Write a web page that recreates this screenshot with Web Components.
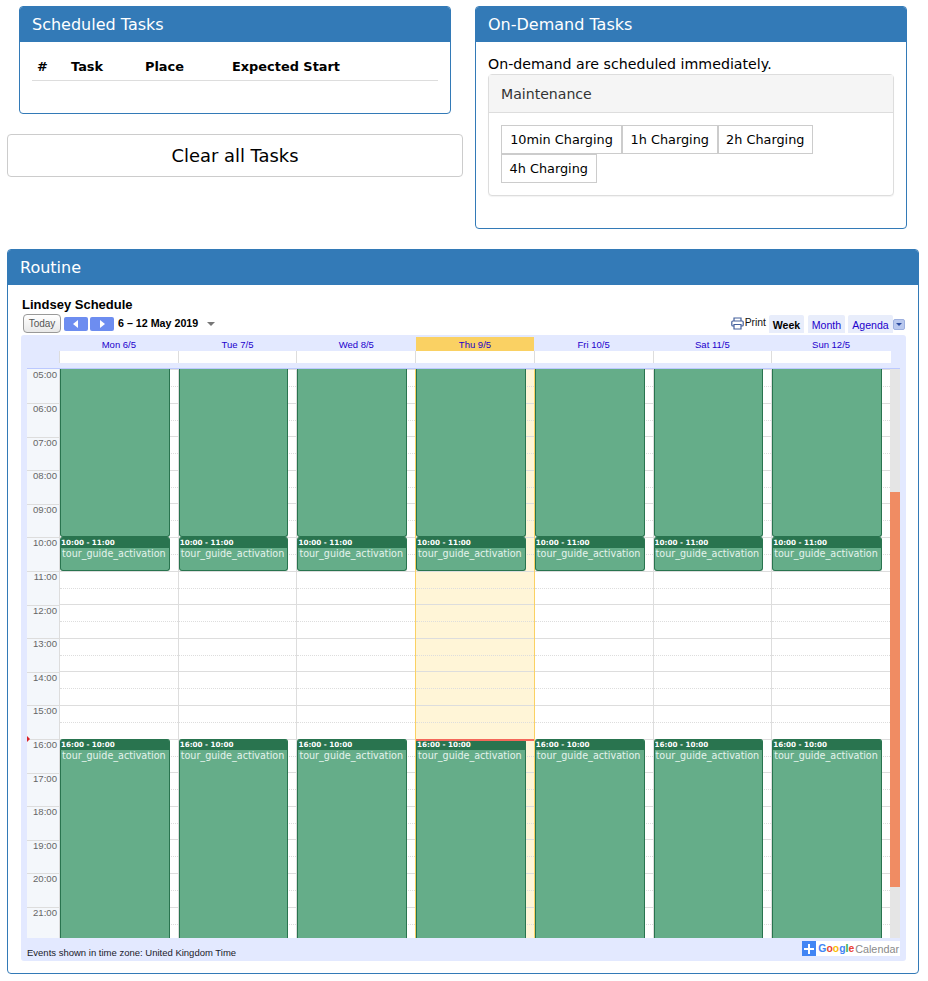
<!DOCTYPE html>
<html>
<head>
<meta charset="utf-8">
<title>Lindsey Schedule</title>
<style>
  body { margin: 0; background: #fff; font-family: "DejaVu Sans", sans-serif; color: #000; }
</style>
</head>
<body>
<task-page></task-page>
<script>
const HOUR_H = 33.6;

class AppPanel extends HTMLElement {
    constructor() {
        super();
        this.attachShadow({mode: "open"}).innerHTML = `
        <style>
          :host { display: block; box-sizing: border-box; border: 1px solid #337ab7; border-radius: 4px; background: #fff; overflow: hidden; }
          header { background: #337ab7; color: #fff; height: 35px; line-height: 35px; padding: 0 12px; font-size: 16px; }
          main { padding: var(--panel-padding, 12px); }
        </style>
        <header>${this.getAttribute("heading")}</header>
        <main><slot></slot></main>`;
    }
}

class TaskTable extends HTMLElement {
    constructor() {
        super();
        this.attachShadow({mode: "open"}).innerHTML = `
        <style>
          :host { display: block; font-size: 12.9px; height: 59px; }
          .row { display: grid; grid-template-columns: 34px 74px 87px 1fr; height: 27px; padding-bottom: 2px; box-sizing: border-box; border-bottom: 1px solid #ddd; align-items: center; font-weight: bold; }
          .row span { padding-left: 5px; }
        </style>
        <div class="row"><span>#</span><span>Task</span><span>Place</span><span>Expected Start</span></div>`;
    }
}

class ClearButton extends HTMLElement {
    constructor() {
        super();
        this.attachShadow({mode: "open"}).innerHTML = `
        <style>
          :host { display: block; box-sizing: border-box; height: 43px; line-height: 41px; text-align: center; font-size: 17.9px; border: 1px solid #ccc; border-radius: 4px; background: #fff; color: #000; }
        </style>
        <slot></slot>`;
    }
}

class MaintenanceBox extends HTMLElement {
    constructor() {
        super();
        this.attachShadow({mode: "open"}).innerHTML = `
        <style>
          :host { display: block; box-sizing: border-box; border: 1px solid #ddd; border-radius: 4px; background: #fff; box-shadow: 0 1px 1px rgba(0,0,0,.05); }
          header { background: #f5f5f5; color: #333; height: 37px; line-height: 39px; padding: 0 12px; font-size: 14.1px; border-bottom: 1px solid #ddd; }
          main { display: flex; flex-wrap: wrap; padding: 12px; }
          button { box-sizing: border-box; width: 95.5px; height: 29px; padding: 0; font: 12.85px "DejaVu Sans", sans-serif; background: #fff; color: #000; border: 1px solid #ccc; }
          button:first-child { width: 121px; }
        </style>
        <header>Maintenance</header>
        <main>
          <button>10min Charging</button><button>1h Charging</button><button>2h Charging</button><button>4h Charging</button>
        </main>`;
    }
}

class GcalToolbar extends HTMLElement {
    constructor() {
        super();
        this.attachShadow({mode: "open"}).innerHTML = `
        <style>
          :host { display: flex; align-items: flex-start; height: 22px; font-family: "Liberation Sans", sans-serif; }
          .today { box-sizing: border-box; width: 38px; height: 19px; margin: 1px 0 0 2px; border: 1px solid #999; border-radius: 4px; background: linear-gradient(#fff, #e8e8e8); color: #555; font-size: 10px; line-height: 17px; text-align: center; }
          .nav { width: 24px; height: 14px; margin: 4px 0 0 3px; background: #6d8df0; border-radius: 2px; display: flex; align-items: center; justify-content: center; }
          .nav + .nav { margin-left: 2px; }
          .date { margin: 3px 0 0 4px; font-size: 10.7px; font-weight: bold; line-height: 15px; }
          .caret { margin: 9px 0 0 9px; width: 0; height: 0; border: 4px solid transparent; border-top: 4px solid #777; border-bottom: 0; }
          .right { margin-left: auto; display: flex; align-items: flex-start; }
          .print { display: flex; margin: 4px 3px 0 0; font-size: 10.4px; line-height: 12px; color: #111; }
          .print svg { margin-right: 1px; }
          .tab { box-sizing: border-box; height: 18px; margin: 2px 0 0 0; background: #e8edfb; border-radius: 2px 2px 0 0; font-size: 10.6px; line-height: 20px; text-align: center; color: #2200cc; }
          .tab.on { font-weight: bold; color: #000; }
          .drop { box-sizing: border-box; width: 12px; height: 11px; margin: 6px 1px 0 0; background: #b9c8ee; border: 1px solid #9db0e0; border-radius: 2px; display: flex; align-items: center; justify-content: center; }
          .drop i { width: 0; height: 0; border: 3px solid transparent; border-top: 3px solid #2b4a9e; border-bottom: 0; }
        </style>
        <div class="today">Today</div>
        <div class="nav"><svg width="6" height="8" viewBox="0 0 6 8"><path d="M5 0v8L0 4z" fill="#fff"/></svg></div>
        <div class="nav"><svg width="6" height="8" viewBox="0 0 6 8"><path d="M1 0v8l5-4z" fill="#fff"/></svg></div>
        <div class="date">6 – 12 May 2019</div>
        <div class="caret"></div>
        <div class="right">
          <div class="print">
            <svg width="13" height="13" viewBox="0 0 13 13" fill="none" stroke="#44609c" stroke-width="1.2"><path d="M3 4V1h7v3"/><rect x=".8" y="4" width="11.4" height="5" rx="1"/><path d="M3 7.5h7V12H3z" fill="#fff"/></svg>
            Print
          </div>
          <div class="tab on" style="width:35px">Week</div>
          <div class="tab" style="width:37px;margin-left:4px">Month</div>
          <div class="tab" style="width:45px;margin-left:3px">Agenda</div>
          <div class="drop"><i></i></div>
        </div>`;
    }
}

class GcalEvent extends HTMLElement {
    constructor() {
        super();
        const time = this.getAttribute("time");
        this.attachShadow({mode: "open"}).innerHTML = `
        <style>
          :host { position: absolute; left: 0; width: 109.7px; box-sizing: border-box; border: 1px solid #29744f; border-top: 0; border-radius: 3px; background: #65ad89; overflow: hidden; color: #e4f3ec; font-family: "DejaVu Sans", sans-serif; }
          :host([cut]) { border-radius: 0 0 3px 3px; }
          .time { height: 11px; line-height: 11px; margin: 0 -1px; padding-left: 1px; background: #29744f; color: #fff; font-size: 7.2px; font-weight: bold; white-space: nowrap; }
          .name { padding-left: 1px; font-size: 9.6px; line-height: 12px; white-space: nowrap; }
        </style>
        ${time ? `<div class="time">${time}</div><div class="name">tour_guide_activation</div>` : ""}`;
    }
}

class GcalDay extends HTMLElement {
    constructor() {
        super();
        let hours = "";
        for (let h = 0; h < 17; h++) {
            hours += `<div class="hour"><div class="half"></div></div>`;
        }
        this.attachShadow({mode: "open"}).innerHTML = `
        <style>
          :host { display: block; position: relative; box-sizing: border-box; border-left: 1px solid #ddd; background: #fff; }
          :host([today]) { background: #fff5d7; }
          :host([today]), :host([after-today]) { border-left-color: #fad163; }
          .hour { box-sizing: border-box; height: ${HOUR_H}px; border-top: 1px solid #ddd; }
          .hour:first-child { height: 34px; border-top-color: transparent; }
          .half { height: 17px; border-bottom: 1px dotted #ddd; box-sizing: border-box; }
        </style>
        ${hours}<slot></slot>`;
    }
}

class GcalEmbed extends HTMLElement {
    constructor() {
        super();
        const days = ["Mon 6/5", "Tue 7/5", "Wed 8/5", "Thu 9/5", "Fri 10/5", "Sat 11/5", "Sun 12/5"];
        const top = h => (h - 5) * HOUR_H + 0.4;
        const names = days.map((d, i) => `<div class="name${i == 3 ? " today" : ""}">${d}</div>`).join("");
        const cells = days.map(() => `<div class="cell"></div>`).join("");
        let times = "";
        for (let h = 5; h <= 21; h++) {
            times += `<div class="time">${String(h).padStart(2, "0")}:00</div>`;
        }
        const columns = days.map((d, i) => `
            <gcal-day ${i == 3 ? "today" : ""} ${i == 4 ? "after-today" : ""}>
              <gcal-event cut style="top:0;height:${top(10)}px"></gcal-event>
              <gcal-event time="10:00 - 11:00" style="top:${top(10)}px;height:${HOUR_H}px"></gcal-event>
              <gcal-event time="16:00 - 10:00" style="top:${top(16) - 0.4}px;height:240px"></gcal-event>
              ${i == 3 ? `<div style="position:absolute;left:0;right:0;top:${top(16)}px;height:1.5px;background:#f4685a"></div>` : ""}
            </gcal-day>`).join("");
        this.attachShadow({mode: "open"}).innerHTML = `
        <style>
          :host { display: block; font-family: "Liberation Sans", sans-serif; }
          .title { height: 16px; padding-left: 1px; font-size: 13px; font-weight: bold; line-height: 16px; }
          .frame { background: #e3e9ff; border-radius: 3px; height: 626px; padding: 0 6px; box-sizing: border-box; }
          .names, .allday { display: grid; grid-template-columns: repeat(7, 118.71px); }
          .names { height: 16px; grid-template-rows: 16px; margin-left: 32.5px; }
          .allday { margin-left: 32px; grid-template-rows: 12px; }
          .name { font-size: 9.5px; line-height: 19px; text-align: center; color: #2200cc; }
          .name.today { background: #fad163; margin-top: 2px; line-height: 15px; }
          .allday { background: #fff; width: 832px; height: 12px; }
          .cell { border-left: 1px solid #ddd; }
          .rule { height: 5px; border-bottom: 1px solid #bcc9ff; }
          .body { display: flex; height: 569px; overflow: hidden; position: relative; }
          .times { width: 32px; flex: none; background: #f4f7fb; }
          .time { box-sizing: border-box; height: ${HOUR_H}px; border-top: 1px solid #ddd; padding: 0 2px 0 0; font-size: 9.6px; line-height: 10px; text-align: right; color: #666; }
          .time:first-child { height: 34px; border-top-color: transparent; }
          .days { display: grid; grid-template-columns: repeat(7, 118.71px); width: 831px; flex: none; background: #fff; }
          .marker { position: absolute; left: 0; top: 367px; width: 0; height: 0; border: 3px solid transparent; border-left: 3px solid #d9202a; border-right: 0; }
          .scroll { width: 10px; flex: none; background: #e5e5e5; }
          .thumb { height: 395px; margin-top: 123px; background: #f08c63; }
          .foot { display: flex; align-items: flex-start; justify-content: space-between; height: 23px; }
          .zone { margin-top: 9px; font-size: 9.5px; line-height: 12px; color: #1a1a2a; }
          .logo { display: flex; align-items: center; height: 15px; margin-top: 3px; background: #fff; padding-right: 1px; }
          .plus { width: 14px; height: 15px; background: #4285f4; display: flex; align-items: center; justify-content: center; margin-right: 2px; }
          .google { font-size: 10.4px; font-weight: bold; margin-right: 1px; }
          .cal { font-size: 10.8px; color: #8a8a8a; }
        </style>
        <div class="title">Lindsey Schedule</div>
        <gcal-toolbar></gcal-toolbar>
        <div class="frame">
          <div class="names">${names}</div>
          <div class="allday">${cells}</div>
          <div class="rule"></div>
          <div class="body">
            <div class="times">${times}</div>
            <div class="days">${columns}</div>
            <div class="scroll"><div class="thumb"></div></div>
            <div class="marker"></div>
          </div>
          <div class="foot">
            <div class="zone">Events shown in time zone: United Kingdom Time</div>
            <div class="logo">
              <div class="plus"><svg width="10" height="10" viewBox="0 0 10 10"><path d="M4 0h2v4h4v2H6v4H4V6H0V4h4z" fill="#fff"/></svg></div>
              <span class="google"><span style="color:#4285f4">G</span><span style="color:#ea4335">o</span><span style="color:#fbbc05">o</span><span style="color:#4285f4">g</span><span style="color:#34a853">l</span><span style="color:#ea4335">e</span></span>
              <span class="cal">Calendar</span>
            </div>
          </div>
        </div>`;
    }
}

class TaskPage extends HTMLElement {
    constructor() {
        super();
        this.attachShadow({mode: "open"}).innerHTML = `
        <style>
          :host { display: block; padding: 6px 9px 7px 7px; }
          .top { display: grid; grid-template-columns: 456px 432px; column-gap: 12px; height: 243px; align-items: start; }
          .left { display: flex; flex-direction: column; gap: 20px; }
          .scheduled { margin: 0 12px; height: 108px; }
          .demand { height: 223px; }
          p { margin: 0; height: 20px; line-height: 20px; font-size: 14.2px; }
          .routine { height: 725px; --panel-padding: 12px 12px 12px 13px; }
        </style>
        <div class="top">
          <div class="left">
            <app-panel class="scheduled" heading="Scheduled Tasks"><task-table></task-table></app-panel>
            <clear-button>Clear all Tasks</clear-button>
          </div>
          <app-panel class="demand" heading="On-Demand Tasks">
            <p>On-demand are scheduled immediately.</p>
            <maintenance-box></maintenance-box>
          </app-panel>
        </div>
        <app-panel class="routine" heading="Routine"><gcal-embed></gcal-embed></app-panel>`;
    }
}

customElements.define("app-panel", AppPanel);
customElements.define("task-table", TaskTable);
customElements.define("clear-button", ClearButton);
customElements.define("maintenance-box", MaintenanceBox);
customElements.define("gcal-toolbar", GcalToolbar);
customElements.define("gcal-event", GcalEvent);
customElements.define("gcal-day", GcalDay);
customElements.define("gcal-embed", GcalEmbed);
customElements.define("task-page", TaskPage);
</script>
</body>
</html>
